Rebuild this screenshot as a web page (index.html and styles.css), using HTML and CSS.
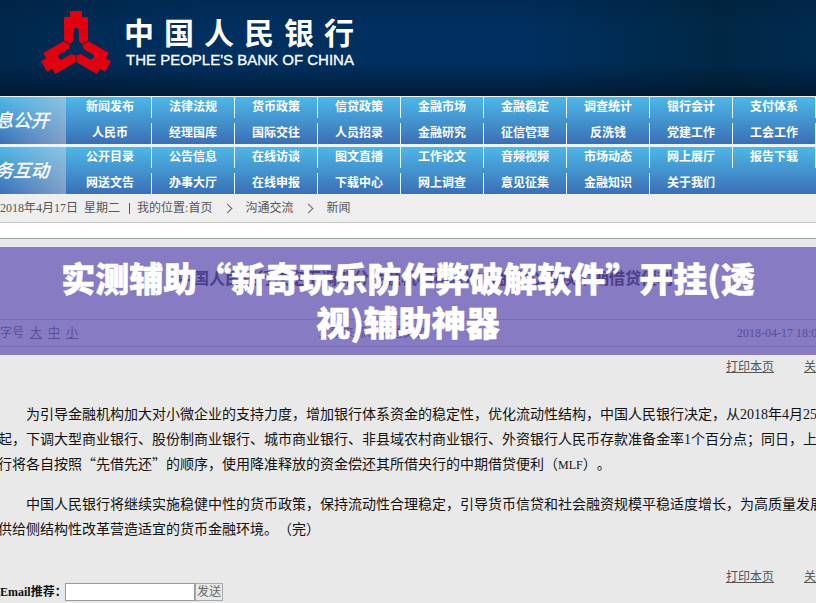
FILE: index.html
```html
<!DOCTYPE html>
<html lang="zh-CN">

<head>
    <meta charset="UTF-8">
    <meta name="viewport" content="width=device-width, initial-scale=1.0">
    <title>中国人民银行</title>
    <link rel="stylesheet" href="styles.css">
</head>

<body>
    <header class="site-header">
        <svg class="logo" viewBox="-36 -38 72 66" aria-hidden="true">
            <defs>
                <path id="coin" d="M-6-37H6v6h6v23.500L6-4 2.800-7V-17a2.800 3 0 0 0-5.600 0V-7L-6-4l-6-3.500V-31h6z" />
            </defs>
            <use href="#coin" />
            <use href="#coin" transform="rotate(120)" />
            <use href="#coin" transform="rotate(240)" />
        </svg>
        <div class="brand">
            <div class="brand-cn">
                <span>中</span><span>国</span><span>人</span><span>民</span><span>银</span><span>行</span>
            </div>
            <div class="brand-en">THE PEOPLE'S BANK OF CHINA</div>
        </div>
    </header>

    <nav>
        <div class="nav-row">
            <div class="nav-label">信息公开</div>
            <ul>
                <li><a href="#">新闻发布</a></li>
                <li><a href="#">法律法规</a></li>
                <li><a href="#">货币政策</a></li>
                <li><a href="#">信贷政策</a></li>
                <li><a href="#">金融市场</a></li>
                <li><a href="#">金融稳定</a></li>
                <li><a href="#">调查统计</a></li>
                <li><a href="#">银行会计</a></li>
                <li><a href="#">支付体系</a></li>
                <li><a href="#">人民币</a></li>
                <li><a href="#">经理国库</a></li>
                <li><a href="#">国际交往</a></li>
                <li><a href="#">人员招录</a></li>
                <li><a href="#">金融研究</a></li>
                <li><a href="#">征信管理</a></li>
                <li><a href="#">反洗钱</a></li>
                <li><a href="#">党建工作</a></li>
                <li><a href="#">工会工作</a></li>
            </ul>
        </div>
        <div class="nav-row">
            <div class="nav-label">服务互动</div>
            <ul>
                <li><a href="#">公开目录</a></li>
                <li><a href="#">公告信息</a></li>
                <li><a href="#">在线访谈</a></li>
                <li><a href="#">图文直播</a></li>
                <li><a href="#">工作论文</a></li>
                <li><a href="#">音频视频</a></li>
                <li><a href="#">市场动态</a></li>
                <li><a href="#">网上展厅</a></li>
                <li><a href="#">报告下载</a></li>
                <li><a href="#">网送文告</a></li>
                <li><a href="#">办事大厅</a></li>
                <li><a href="#">在线申报</a></li>
                <li><a href="#">下载中心</a></li>
                <li><a href="#">网上调查</a></li>
                <li><a href="#">意见征集</a></li>
                <li><a href="#">金融知识</a></li>
                <li class="last"><a href="#">关于我们</a></li>
            </ul>
        </div>
    </nav>

    <div class="crumbs">
        <span class="date">2018年4月17日</span>
        <span>星期二</span>
        <span class="bar"></span>
        <span>我的位置:<a href="#">首页</a></span>
        <span class="arrow"></span>
        <a href="#">沟通交流</a>
        <span class="arrow"></span>
        <a href="#">新闻</a>
    </div>
    <div class="spacer"></div>

    <main>
        <div class="article-head">
            <h2>中国人民银行决定下调部分金融机构存款准备金率以置换中期借贷便利</h2>
            <div class="meta">
                <span class="sizes">字号 <a href="#">大</a> <a href="#">中</a> <a href="#">小</a></span>
                <span class="source">文章来源：沟通交流</span>
                <span class="time">2018-04-17 18:00:00</span>
            </div>
            <div class="overlay">
                <h1>实测辅助“新奇玩乐防作弊破解软件”开挂(透视)辅助神器</h1>
            </div>
        </div>

        <div class="tools">
            <a href="#">打印本页</a>
            <a href="#">关闭窗口</a>
        </div>

        <article>
            <p>为引导金融机构加大对小微企业的支持力度，增加银行体系资金的稳定性，优化流动性结构，中国人民银行决定，从2018年4月25日<br>
                起，下调大型商业银行、股份制商业银行、城市商业银行、非县域农村商业银行、外资银行人民币存款准备金率1个百分点；同日，上述银<br>
                行将各自按照<span class="quote">“</span>先借先还<span class="quote">”</span>的顺序，使用降准释放的资金偿还其所借央行的中期借贷便利（<span class="abbr">MLF</span>）。</p>
            <p>中国人民银行将继续实施稳健中性的货币政策，保持流动性合理稳定，引导货币信贷和社会融资规模平稳适度增长，为高质量发展和<br>
                供给侧结构性改革营造适宜的货币金融环境。（完）</p>
        </article>

        <div class="tools tools-bottom">
            <a href="#">打印本页</a>
            <a href="#">关闭窗口</a>
        </div>

        <form class="email">
            <label for="email">Email推荐：</label>
            <input type="text" id="email">
            <button type="button">发送</button>
        </form>
    </main>
</body>

</html>
```

FILE: styles.css
```css
* {
    margin: 0;
    padding: 0;
    box-sizing: border-box;
}

body {
    font-family: "Liberation Serif", "Noto Sans CJK SC", serif;
    font-size: 12px;
    line-height: 16px;
    color: #555;
    background-color: #e9e9e9;
    overflow: hidden;
    text-spacing-trim: space-all;
}

a {
    color: inherit;
    text-decoration: none;
}

/* Header */
.site-header {
    display: flex;
    align-items: flex-start;
    height: 96px;
    padding: 10px 0 0 40px;
    background: linear-gradient(rgba(0, 20, 40, 0.2), rgba(0, 20, 40, 0) 30%, rgba(0, 20, 40, 0) 65%, rgba(0, 20, 40, 0.7)),
        linear-gradient(90deg, #00284d, #003060 25%, #003060 65%, #002845 88%, #002a50);
}

.logo {
    width: 72px;
    height: 66px;
    fill: #e0000f;
}

.brand {
    margin-left: 12px;
    color: #fff;
}

.brand-cn {
    display: flex;
    justify-content: space-between;
    margin-top: 6px;
    font-size: 30px;
    font-weight: bold;
    line-height: 36px;
}

.brand-en {
    padding-left: 2px;
    font-family: "Liberation Sans", sans-serif;
    font-size: 15px;
    line-height: 16px;
    -webkit-text-stroke: 0.3px #fff;
}

/* Navigation */
nav {
    display: grid;
    gap: 3px;
    padding-top: 1px;
    background-color: #e8f6fc;
}

.nav-row {
    display: flex;
    height: 47px;
    background: linear-gradient(#4db8e8, #3a6fb5);
}

.nav-label {
    display: flex;
    flex: none;
    align-items: center;
    justify-content: flex-end;
    width: 66px;
    padding-right: 17px;
    overflow: hidden;
    font-size: 18px;
    font-style: italic;
    white-space: nowrap;
    color: #fff;
    background: linear-gradient(90deg, rgba(255, 255, 255, 0), rgba(200, 205, 220, 0.5));
    -webkit-text-stroke: 0.4px #fff;
}

.nav-row ul {
    display: grid;
    flex: 1;
    grid-template-columns: repeat(9, 1fr);
    grid-auto-rows: 21px;
    row-gap: 5px;
    padding-left: 3px;
    list-style: none;
}

.nav-row li {
    border-right: 1px solid #e8f6fc;
    font-weight: bold;
    line-height: 21px;
    text-align: center;
    color: #fff;
}

.nav-row li.last {
    border-color: transparent;
}

/* Breadcrumb */
.crumbs {
    display: flex;
    align-items: center;
    gap: 6px;
    height: 28px;
    white-space: nowrap;
    background-color: #efefef;
}

.bar {
    width: 1px;
    height: 11px;
    margin: 0 1px 0 3px;
    background-color: #555;
}

.arrow {
    width: 7px;
    height: 7px;
    margin: 0 8px 0 6px;
    border: solid #666;
    border-width: 1px 1px 0 0;
    transform: rotate(45deg);
}

.spacer {
    height: 17px;
    background-color: #fff;
    border-top: 1px solid #c4c4c4;
    border-bottom: 1px solid #9ea6a2;
}

/* Article */
.article-head {
    position: relative;
    margin-top: 8px;
    padding: 20px 0 8px;
}

.article-head h2 {
    padding-left: 34px;
    font-size: 16px;
    line-height: 24px;
    text-align: center;
    white-space: nowrap;
    color: #222;
}

.meta {
    display: grid;
    grid-template-columns: 39% 1fr 79px;
    height: 28px;
    margin-top: 28px;
    border-top: 1px solid #bbb;
    border-bottom: 1px solid #bbb;
    line-height: 26px;
    white-space: nowrap;
}

.sizes {
    word-spacing: 3px;
}

.sizes a,
.tools a {
    text-decoration: underline;
}

.overlay {
    position: absolute;
    inset: 0;
    padding: 9px 56px 0;
    background-color: rgba(93, 76, 180, 0.7);
}

.overlay h1 {
    font-family: "Noto Sans CJK SC", sans-serif;
    font-size: 34px;
    font-weight: 900;
    line-height: 44px;
    text-align: center;
    color: #fff;
    -webkit-text-stroke: 0.5px #fff;
}

.tools {
    display: flex;
    justify-content: flex-end;
    gap: 30px;
    margin-right: -36px;
}

.article-head + .tools {
    padding-top: 4px;
}

article {
    margin-left: -2px;
    padding-top: 27px;
    font-size: 14px;
    line-height: 25px;
    white-space: nowrap;
    color: #111;
}

article p {
    margin-bottom: 15px;
    text-indent: 2em;
}

.quote,
.abbr {
    line-height: 1;
}

.quote {
    font-family: "Noto Sans CJK SC", sans-serif;
}

.abbr {
    font-size: 12px;
}

.tools-bottom {
    height: 14px;
    margin-top: 27px;
}

/* Email form */
.email {
    display: flex;
    align-items: center;
    height: 18px;
    color: #111;
}

.email label {
    flex: none;
    width: 65px;
    font-weight: bold;
    white-space: nowrap;
}

.email input {
    width: 130px;
    height: 18px;
    border: 1px solid #999;
    background-color: #fff;
}

.email button {
    width: 28px;
    height: 18px;
    border: 1px solid #aaa;
    font-family: inherit;
    font-size: 12px;
    line-height: 16px;
    color: #666;
    background-color: #e9e9e9;
}
```
